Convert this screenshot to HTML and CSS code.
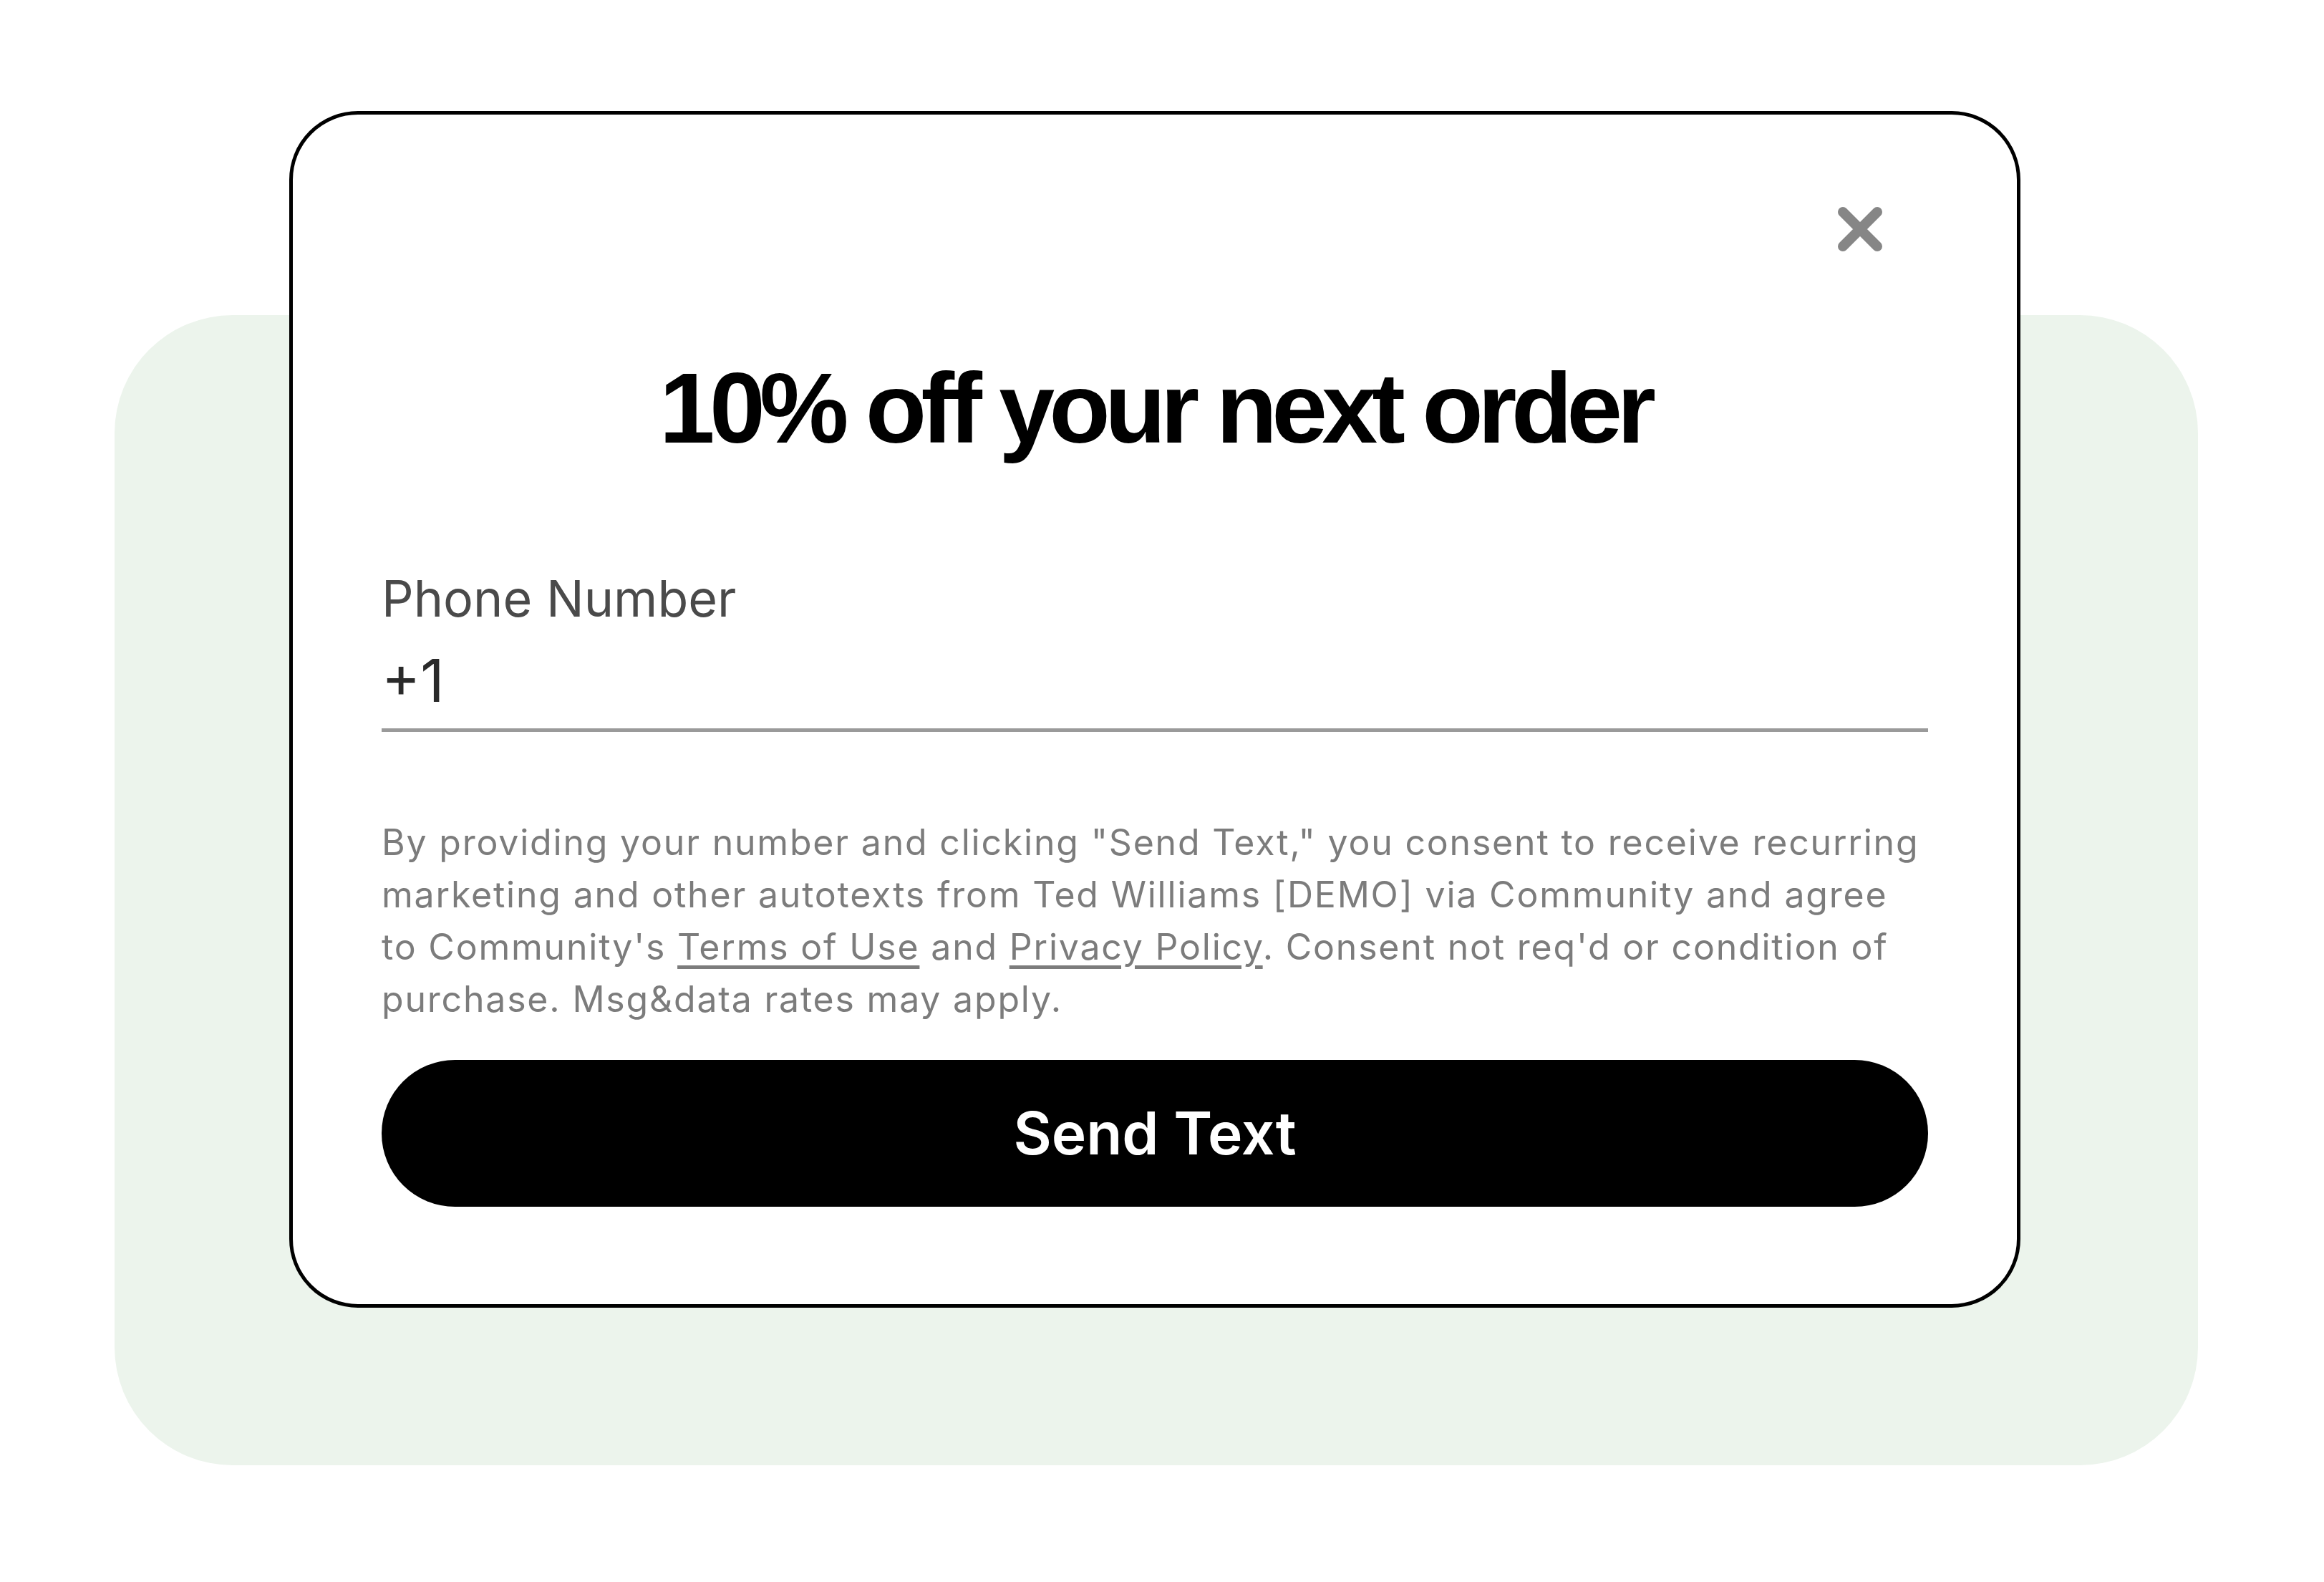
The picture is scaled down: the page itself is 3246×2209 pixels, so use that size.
FILE: index.html
```html
<!DOCTYPE html>
<html>
<head>
    <title>10% off your next order</title>
    <link rel="stylesheet" href="styles.css">
</head>
<body>
    <div class="escenario">
        <div class="popup">
            <button class="cerrar" aria-label="Cerrar">
                <svg viewBox="0 0 64 64" width="64" height="64">
                    <path d="M8 8 L56 56 M56 8 L8 56" stroke="#868686" stroke-width="14" stroke-linecap="round" fill="none"/>
                </svg>
            </button>

            <h1 class="titulo">10% off your next order</h1>

            <div class="campo">
                <label class="campo-label" for="telefono">Phone Number</label>
                <input id="telefono" class="campo-input" type="text" value="+1">
            </div>

            <p class="aviso">
                By providing your number and clicking "Send Text," you consent to receive recurring
                marketing and other autotexts from Ted Williams [DEMO] via Community and agree
                to Community's <a href="#">Terms of Use</a> and <a href="#">Privacy Policy</a>. Consent not req'd or condition of
                purchase. Msg&amp;data rates may apply.
            </p>

            <button class="enviar">Send Text</button>
        </div>
    </div>
</body>
</html>
```

FILE: styles.css
```css
body {
    margin: 0;
    background-color: #fff;
    font-family: Inter, "Noto Sans", sans-serif;
}

.escenario {
    position: relative;
    height: 2209px;
    padding: 155px 0 0 404px;
    box-sizing: border-box;
    overflow: hidden;
}

/* fondo verde detras de la tarjeta */
.escenario::before {
    content: "";
    position: absolute;
    left: 160px;
    top: 440px;
    width: 2910px;
    height: 1606px;
    border-radius: 165px;
    background-color: #ecf4ec;
}

.popup {
    position: relative;
    width: 2418px;
    box-sizing: border-box;
    padding: 340px 124px 136px;
    background-color: #fff;
    border: 5px solid #000;
    border-radius: 96px;
}

.cerrar {
    position: absolute;
    top: 128px;
    right: 187px;
    width: 64px;
    height: 64px;
    padding: 0;
    border: none;
    background: none;
    cursor: pointer;
}

.cerrar svg {
    display: block;
}

.titulo {
    margin: 0;
    font-family: "Liberation Sans", Arial, sans-serif;
    font-weight: bold;
    font-size: 140px;
    line-height: 140px;
    letter-spacing: -7.8px;
    text-align: center;
    color: #000;
}

.campo {
    margin-top: 154px;
}

.campo-label {
    display: block;
    font-size: 70px;
    line-height: 84px;
    color: #4a4a4a;
}

.campo-input {
    display: block;
    width: 100%;
    box-sizing: border-box;
    margin-top: 22px;
    padding: 0 0 17px;
    border: none;
    border-bottom: 5px solid #9a9a9a;
    font-family: Inter, "Noto Sans", sans-serif;
    font-size: 82px;
    line-height: 100px;
    height: 122px;
    color: #2a2a2a;
    outline: none;
}

.aviso {
    margin: 118px 0 0;
    font-size: 50px;
    line-height: 73px;
    letter-spacing: 1.8px;
    color: #7c7c7c;
}

.aviso a {
    color: #7c7c7c;
    text-decoration: underline;
    text-underline-offset: 8px;
}

.enviar {
    display: block;
    width: 100%;
    height: 205px;
    margin-top: 48px;
    border: none;
    border-radius: 103px;
    background-color: #000;
    color: #fff;
    font-family: Inter, "Noto Sans", sans-serif;
    font-weight: 600;
    font-size: 82px;
    cursor: pointer;
}
```
